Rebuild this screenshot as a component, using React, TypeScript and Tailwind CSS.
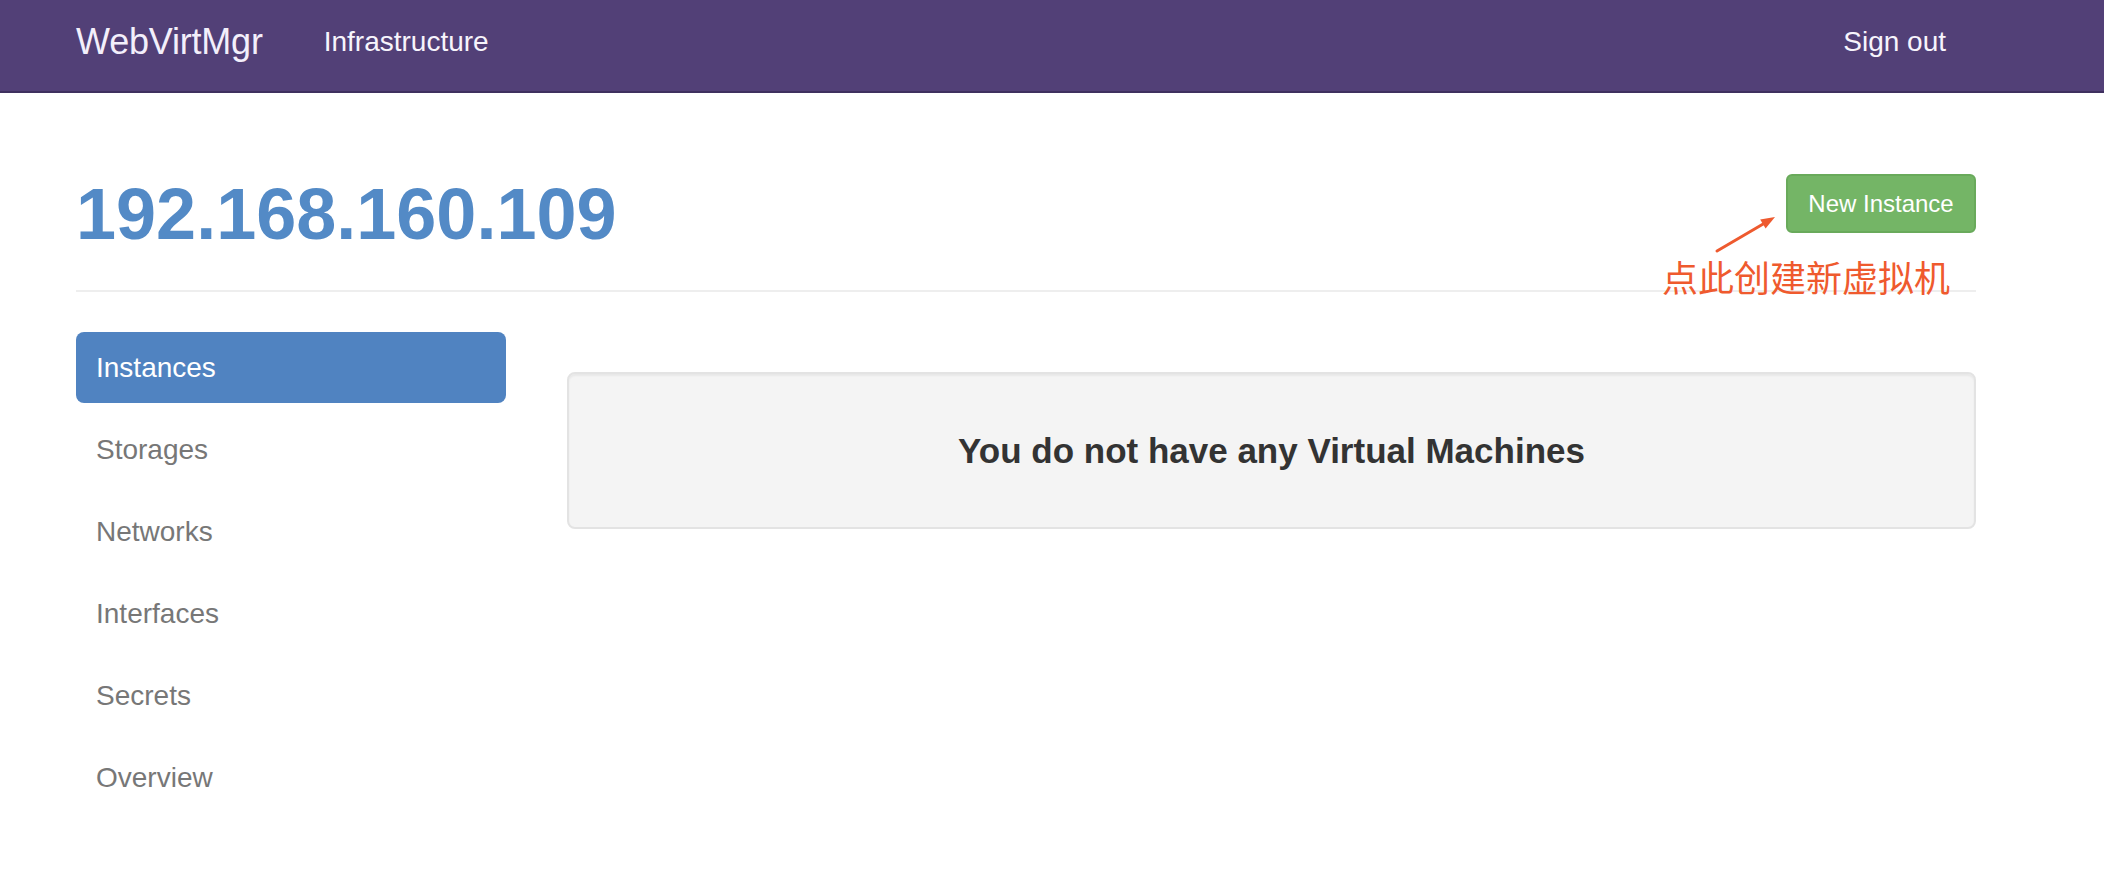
import React from "react";

const navItems = ["Instances", "Storages", "Networks", "Interfaces", "Secrets", "Overview"];

export default function App() {
    return (
        <div className="min-h-screen bg-white font-['Liberation_Sans',Arial,sans-serif]">
            <nav className="h-[93px] bg-[#524077] border-b-2 border-[#3f305f]">
                <div className="w-[1900px] ml-[76px] h-full flex items-center pb-2">
                    <a className="text-[36px] text-[#f3effb] leading-none tracking-[-0.2px]" href="#">
                        WebVirtMgr
                    </a>
                    <a className="ml-[61px] text-[28px] text-[#f7f4fc] leading-none" href="#">
                        Infrastructure
                    </a>
                    <a className="ml-auto mr-[30px] text-[28px] text-[#f7f4fc] leading-none" href="#">
                        Sign out
                    </a>
                </div>
            </nav>

            <div className="w-[1900px] ml-[76px]">
                <div className="flex items-start justify-between pt-[81px]">
                    <h1 className="mt-[4px] text-[72px] font-bold leading-none text-[#538ac6]">
                        192.168.160.109
                    </h1>
                    <div className="relative">
                        <button className="h-[59px] w-[190px] rounded-[6px] border-2 border-[#69aa5b] bg-[#74b566] text-[24px] text-white">
                            New Instance
                        </button>
                        <svg
                            className="absolute left-[-76px] top-[36px]"
                            width="70"
                            height="48"
                            viewBox="0 0 70 48"
                        >
                            <line x1="7" y1="41" x2="54" y2="13.5" stroke="#ee5a2f" strokeWidth="3" strokeLinecap="round" />
                            <polygon points="65,7 55.6,18.6 50.2,9.6" fill="#ee5a2f" />
                        </svg>
                        <span className="absolute left-[-124px] top-[84px] whitespace-nowrap text-[36px] leading-none text-[#ef5a2e] font-['Noto_Sans_CJK_SC',sans-serif]">
                            点此创建新虚拟机
                        </span>
                    </div>
                </div>

                <div className="mt-[40px] h-[2px] bg-[#eeeeee]" />

                <div className="flex mt-[40px]">
                    <ul className="w-[430px] flex flex-col gap-[11px]">
                        {navItems.map((item, i) => (
                            <li key={item}>
                                <a
                                    href="#"
                                    className={`h-[71px] flex items-center pl-[20px] text-[28px] rounded-[8px] ${
                                        i === 0 ? "bg-[#5083c1] text-white" : "text-[#777777]"
                                    }`}
                                >
                                    {item}
                                </a>
                            </li>
                        ))}
                    </ul>

                    <div className="ml-[61px] mt-[40px] w-[1409px] h-[157px] flex items-center justify-center rounded-[8px] border-2 border-[#e3e3e3] bg-[#f4f4f4] shadow-[inset_0_2px_2px_rgba(0,0,0,0.05)]">
                        <h3 className="text-[35px] font-bold text-[#333333] leading-none">
                            You do not have any Virtual Machines
                        </h3>
                    </div>
                </div>
            </div>
        </div>
    );
}
